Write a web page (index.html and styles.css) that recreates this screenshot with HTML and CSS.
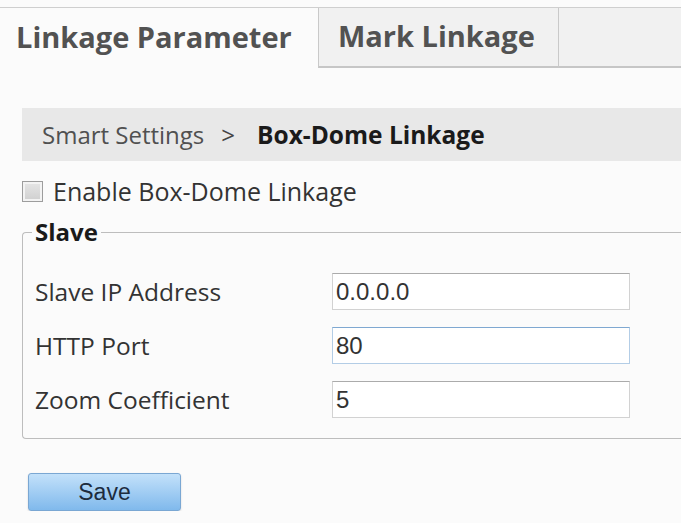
FILE: index.html
```html
<!DOCTYPE html>
<html lang="en">
<head>
    <meta charset="UTF-8">
    <meta name="viewport" content="width=device-width, initial-scale=1.0">
    <title>Box-Dome Linkage</title>
    <link rel="stylesheet" href="styles.css">
</head>
<body>

    <div class="tabs">
        <div class="tab tab-active">Linkage Parameter</div>
        <div class="tab">Mark Linkage</div>
        <div class="tab-rest"></div>
    </div>

    <div class="content">
        <div class="crumbs">
            <span class="crumb-parent">Smart Settings</span>
            <span class="crumb-sep">&gt;</span>
            <span class="crumb-current">Box-Dome Linkage</span>
        </div>

        <label class="enable">
            <input type="checkbox" id="enable">
            <span>Enable Box-Dome Linkage</span>
        </label>

        <fieldset class="group">
            <legend>Slave</legend>
            <div class="form-grid">
                <label for="slave-ip">Slave IP Address</label>
                <input type="text" id="slave-ip" value="0.0.0.0">
                <label for="http-port">HTTP Port</label>
                <input type="text" id="http-port" class="focused" value="80">
                <label for="zoom">Zoom Coefficient</label>
                <input type="text" id="zoom" value="5">
            </div>
        </fieldset>

        <button class="btn-save">Save</button>
    </div>

</body>
</html>
```

FILE: styles.css
```css
body {
    margin: 0;
    background-color: #fbfbfb;
    font-family: "Open Sans", sans-serif;
    color: #333;
    overflow: hidden;
}
.tabs {
    display: flex;
    margin-top: 7px;
    height: 60px;
    border-top: 1px solid #cfcfcf;
}
.tab {
    box-sizing: border-box;
    width: 240px;
    height: 60px;
    padding-left: 19px;
    font-size: 29px;
    font-weight: 700;
    line-height: 56px;
    color: #525252;
    white-space: nowrap;
    background-color: #f1f1f1;
    border-left: 1px solid #c9c9c9;
    border-bottom: 2px solid #c6c6c6;
}
.tab-active {
    width: 318px;
    padding-left: 16px;
    line-height: 58px;
    background-color: #fbfbfb;
    border-left: none;
    border-bottom: none;
}
.tab-rest {
    flex: 1;
    background-color: #f1f1f1;
    border-left: 1px solid #c9c9c9;
    border-bottom: 2px solid #c6c6c6;
}
.content {
    padding-left: 22px;
}
.crumbs {
    margin-top: 40px;
    height: 53px;
    padding-left: 20px;
    display: flex;
    align-items: center;
    background-color: #e8e8e8;
    font-size: 24px;
    color: #505050;
}
.crumb-sep {
    margin: 0 22px 0 17px;
    color: #444;
}
.crumb-current {
    font-size: 24.5px;
    font-weight: 700;
    color: #1a1a1a;
}
.enable {
    margin-top: 16px;
    height: 28px;
    display: flex;
    align-items: center;
    gap: 10px;
    font-size: 25px;
    color: #333;
}
.enable input[type="checkbox"] {
    appearance: none;
    margin: 0;
    width: 21px;
    height: 21px;
    border: 1px solid #9d9d9d;
    background: linear-gradient(#e6e6e6, #cfcfcf);
    box-shadow: inset 0 0 0 2px #f3f3f3;
}
.group {
    margin: 12px 0 0 0;
    padding: 0 0 20px 12px;
    border: 1px solid #bdbdbd;
    border-right: none;
    border-radius: 4px 0 0 4px;
}
.group legend {
    margin-left: -3px;
    padding: 0 3px;
    font-size: 24px;
    font-weight: 700;
    line-height: 30px;
    color: #1a1a1a;
}
.form-grid {
    padding-top: 26px;
    display: grid;
    grid-template-columns: 297px 298px;
    row-gap: 17px;
    align-items: center;
}
.form-grid label {
    font-size: 24.5px;
    color: #333;
}
.form-grid input {
    box-sizing: border-box;
    height: 37px;
    margin: 0;
    padding: 0 3px;
    border: 1px solid #d2d2d2;
    border-top-color: #ababab;
    background-color: #fff;
    font-family: "Liberation Sans", Arial, sans-serif;
    font-size: 24px;
    color: #333;
    outline: none;
}
.form-grid input.focused {
    border-color: #b3cde6;
    border-top-color: #7fa8d1;
}
.btn-save {
    display: block;
    margin: 34px 0 0 6px;
    width: 153px;
    height: 38px;
    border: 1px solid #7aa7d3;
    border-radius: 3px;
    background: linear-gradient(#c3e1fa, #80b9ec);
    box-shadow: 0 1px 2px rgba(0, 0, 0, 0.15);
    font-family: "Liberation Sans", Arial, sans-serif;
    font-size: 23px;
    color: #1d2b3d;
    cursor: pointer;
}
```
